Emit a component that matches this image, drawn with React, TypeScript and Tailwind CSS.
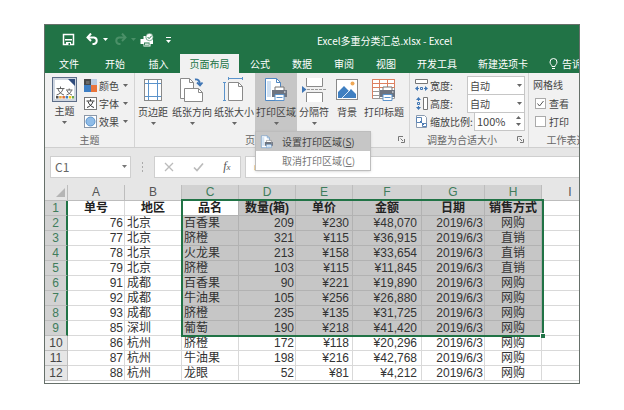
import type { ReactNode } from "react";
import clsx from "clsx";

const tabs = [
  { name: "文件", width: "w-12" },
  { name: "开始", width: "w-11" },
  { name: "插入", width: "w-[43px]" },
  { name: "页面布局", width: "w-[59px]" },
  { name: "公式", width: "w-[42px]" },
  { name: "数据", width: "w-[42px]" },
  { name: "审阅", width: "w-[42px]" },
  { name: "视图", width: "w-[42px]" },
  { name: "开发工具", width: "w-[60px]" },
  { name: "新建选项卡", width: "w-[72px]" },
];

const columns = [
  { name: "A", width: "w-[57px]" },
  { name: "B", width: "w-[57px]" },
  { name: "C", width: "w-[57px]" },
  { name: "D", width: "w-[57px]" },
  { name: "E", width: "w-[57px]" },
  { name: "F", width: "w-[69px]" },
  { name: "G", width: "w-[63px]" },
  { name: "H", width: "w-[57px]" },
  { name: "I", width: "" },
];

const rows = [
  ["单号", "地区", "品名", "数量(箱)", "单价", "金额", "日期", "销售方式"],
  ["76", "北京", "百香果", "209", "¥230", "¥48,070", "2019/6/3", "网购"],
  ["77", "北京", "脐橙", "321", "¥115", "¥36,915", "2019/6/3", "直销"],
  ["78", "北京", "火龙果", "213", "¥158", "¥33,654", "2019/6/3", "直销"],
  ["79", "北京", "脐橙", "103", "¥115", "¥11,845", "2019/6/3", "直销"],
  ["91", "成都", "百香果", "90", "¥221", "¥19,890", "2019/6/3", "网购"],
  ["92", "成都", "牛油果", "105", "¥256", "¥26,880", "2019/6/3", "网购"],
  ["93", "成都", "脐橙", "235", "¥135", "¥31,725", "2019/6/3", "网购"],
  ["85", "深圳", "葡萄", "190", "¥218", "¥41,420", "2019/6/3", "网购"],
  ["86", "杭州", "脐橙", "172", "¥118", "¥20,296", "2019/6/3", "网购"],
  ["87", "杭州", "牛油果", "198", "¥216", "¥42,768", "2019/6/3", "网购"],
  ["88", "杭州", "龙眼", "52", "¥81", "¥4,212", "2019/6/3", "网购"],
];

const aligns = [
  "text-right px-px",
  "text-left px-0.5",
  "text-left px-0.5",
  "text-right px-px",
  "text-right px-[3px]",
  "text-right px-1",
  "text-right px-px",
  "text-center px-0",
];

const isSelectedCol = (c: number) => c >= 2 && c <= 7;
const isSelectedRow = (r: number) => r <= 8;

function Caret({ className = "" }: { className?: string }) {
  return (
    <svg viewBox="0 0 5 3" className={clsx("h-[3px] w-[5px] shrink-0", className)}>
      <path d="M0 0h5L2.5 3z" fill="currentColor" />
    </svg>
  );
}

function Launcher() {
  return (
    <button aria-label="更多选项" className="mr-0.5 flex size-3 items-center justify-center text-[#777]">
      <svg viewBox="0 0 7 7" className="size-[7px]" fill="none" stroke="currentColor">
        <path d="M.5 5V.5H5M2.5 2.5L5 5M6.5 3v3.5H3" />
      </svg>
    </button>
  );
}

/* 快速访问工具栏图标 */

function SaveIcon() {
  return (
    <svg viewBox="0 0 13 13" className="size-[13px]">
      <path d="M1.500 1.500h10v10h-10z" fill="none" stroke="#fff" strokeWidth="1.500" />
      <path d="M3 6h7v1.500H3zM4 9h5v3H4z" fill="#fff" />
      <path d="M6.500 10h1.500v2H6.500z" fill="#217346" />
    </svg>
  );
}

function UndoIcon({ flip = false }: { flip?: boolean }) {
  return (
    <svg
      viewBox="0 0 13 13"
      className={clsx("size-[13px]", flip ? "-scale-x-100 text-[#4b9068]" : "text-white")}
      fill="none"
      stroke="currentColor"
      strokeWidth="2"
    >
      <path d="M2 4.500h6a3.300 3.300 0 0 1 0 6.500H6.500" />
      <path d="M5 .5L1.500 4.500L5 8" />
    </svg>
  );
}

function QuickPrintIcon() {
  return (
    <svg viewBox="0 0 14 14" className="size-3.5">
      <path d="M0.500 6h3V3h4.500v3h5v5h-2.500v2.500h-7V11h-3z" fill="#fff" />
      <path d="M4 9.500h5.500v3H4z" fill="#217346" />
      <path d="M4.800 10.500h4v1.300h-4z" fill="#fff" />
      <circle cx="9.500" cy="4" r="3.700" fill="#fff" stroke="#217346" strokeWidth=".6" />
      <path d="M7.600 4l1.500 1.600L11.800 2.600" fill="none" stroke="#217346" />
    </svg>
  );
}

function BulbIcon() {
  return (
    <svg viewBox="0 0 9 12" className="h-3 w-[9px]" fill="none" stroke="#fff">
      <path d="M3 8.500C3 7 1 6.300 1 4a3.500 3.500 0 0 1 7 0C8 6.300 6 7 6 8.500zM3 10.500h3" />
    </svg>
  );
}

/* 功能区图标 */

function ThemeIcon() {
  return (
    <svg viewBox="0 0 25 25" className="size-[25px]">
      <rect x=".5" y=".5" width="24" height="24" fill="#cfd6e0" stroke="#5c6d88" />
      <path d="M3 3h14l5 5v14H3z" fill="#fff" />
      <path d="M16 2h7v7z" fill="#2f4b7c" />
      <path
        d="M4.500 11.500h8M8.500 9.500v2M6 12c1 3 3 5 6 6M11 12c-1 3-3 5-6.500 6M14 13h6.500M17.200 11.500v1.500M15 13.500c1 2.500 3 3.800 5 4.500M19.500 13.500c-1 2.500-3 3.800-5 4.500"
        fill="none"
        stroke="#555"
        strokeWidth=".9"
      />
      <path d="M4 19h2.500v2.500H4z" fill="#555" />
      <path d="M7.200 19h2.500v2.500H7.200z" fill="#e8a33d" />
      <path d="M10.400 19h2.500v2.500h-2.500z" fill="#e06c3a" />
      <path d="M13.600 19h2.500v2.500h-2.500z" fill="#3f7fc1" />
      <path d="M16.800 19h2.500v2.500h-2.500z" fill="#f0c419" />
      <path d="M20 19h2v2.500h-2z" fill="#6aa84f" />
    </svg>
  );
}

function ColorsIcon() {
  return (
    <svg viewBox="0 0 13 13" className="size-[13px]">
      <path d="M0 0h7v6H0z" fill="#484848" />
      <path d="M7 0h6v6H7z" fill="#b8cbe2" />
      <path d="M0 6h7v7H0z" fill="#3e7fc4" />
      <path d="M7 6h6v7H7z" fill="#e8743b" />
      <path d="M2 2h3.500v3H2z" fill="#6a6a6a" />
    </svg>
  );
}

function FontsIcon() {
  return (
    <svg viewBox="0 0 13 13" className="size-[13px]">
      <rect x=".5" y=".5" width="12" height="12" fill="#fff" stroke="#777" />
      <path d="M2.500 4h8M6.500 2v2M4 4.500c1 3 3 5 6 6M9 4.500c-1 3-3 5-6 6" fill="none" stroke="#333" />
    </svg>
  );
}

function EffectsIcon() {
  return (
    <svg viewBox="0 0 13 13" className="size-[13px]">
      <rect x=".5" y=".5" width="12" height="12" fill="#fff" stroke="#8a97a8" />
      <circle cx="6.500" cy="6.500" r="4.500" fill="#8fbce8" stroke="#5b93cb" />
    </svg>
  );
}

function MarginsIcon() {
  return (
    <svg viewBox="0 0 26 26" className="size-[26px]" fill="none">
      <rect x="4.500" y="2.500" width="17" height="21" fill="#fff" stroke="#8a8a8a" />
      <path d="M8.500 3v20M17.500 3v20M5 6.500h16M5 19.500h16" stroke="#5b93cb" />
    </svg>
  );
}

function OrientationIcon() {
  return (
    <svg viewBox="0 0 26 26" className="size-[26px]" fill="none">
      <path d="M1.500 1.500h9l4 4v16h-13z" fill="#fff" stroke="#8a8a8a" />
      <path d="M10.500 1.500v4h4" stroke="#8a8a8a" />
      <path d="M5.500 11.500h14l4 4v9h-18z" fill="#fff" stroke="#8a8a8a" />
      <path d="M19.500 11.500v4h4" stroke="#8a8a8a" />
      <path d="M16 2.500c3-.5 5 1.500 5 5M18 5.500l3 3l2.500-3" stroke="#3f76b5" strokeWidth="1.800" />
    </svg>
  );
}

function SizeIcon() {
  return (
    <svg viewBox="0 0 26 26" className="size-[26px]" fill="none">
      <path d="M7.500 5.500h10l4 4v14h-14z" fill="#fff" stroke="#8a8a8a" />
      <path d="M17.500 5.500v4h4" stroke="#8a8a8a" />
      <path d="M7 1.500h15M7.500 0v3M21.500 0v3M3.500 5v19M2 5.500h3M2 23.500h3" stroke="#5b93cb" />
    </svg>
  );
}

function PrinterShape() {
  return (
    <>
      <path d="M12 10h9v4h-9z" fill="#fff" stroke="#777" />
      <path d="M9 13h15v7H9z" fill="#6d7480" />
      <path d="M12 17.500h9v6h-9z" fill="#fff" stroke="#5b93cb" />
      <path d="M13.500 20.500h6" stroke="#5b93cb" />
      <path d="M21 14.500h1.500v1H21z" fill="#fff" />
    </>
  );
}

function PrintAreaIcon({ className = "size-[26px]" }: { className?: string }) {
  return (
    <svg viewBox="0 0 26 26" className={className} fill="none">
      <path d="M2.500 1.500h11l4 4v18h-15z" fill="#fff" stroke="#4f87c2" />
      <path d="M13.500 1.500v4h4" stroke="#4f87c2" />
      <path d="M4 4h4v16H4z" fill="#cfe0f2" />
      <PrinterShape />
    </svg>
  );
}

function BreaksIcon() {
  return (
    <svg viewBox="0 0 26 26" className="size-[26px]" fill="none">
      <path d="M5.500 1v8.500h16V1M5.500 25V15.500h16V25" fill="#fff" stroke="#8a8a8a" />
      <path d="M6 12.500h19" stroke="#9a9a9a" strokeDasharray="3 1" />
      <path d="M1 9l4.500 3.500L1 16z" fill="#3f76b5" />
    </svg>
  );
}

function BackgroundIcon() {
  return (
    <svg viewBox="0 0 26 26" className="size-[26px]" fill="none">
      <rect x="2.500" y="2.500" width="21" height="20" fill="#fff" stroke="#8a8a8a" />
      <path d="M4 21v-6l6-6l5 5l2-2l5 5v4z" fill="#3f7fc1" />
      <path d="M8 21l8-8" stroke="#fff" strokeWidth=".8" />
      <circle cx="18.500" cy="6.500" r="2" fill="#efa755" />
    </svg>
  );
}

function PrintTitlesIcon() {
  return (
    <svg viewBox="0 0 26 26" className="size-[26px]" fill="none">
      <path d="M1.500 2.500h22v19h-22z" fill="#fff" stroke="#999" />
      <path d="M1.500 14.500h10M1.500 18.500h8M8.500 10v11M1.500 10.500h22" stroke="#999" />
      <path d="M1.500 2.500h22v8h-22zM1.500 6.500h22M8.500 2.500v8M16.500 2.500v8M1.500 10v11.500" stroke="#dd8060" />
      <PrinterShape />
    </svg>
  );
}

function WidthIcon() {
  return (
    <svg viewBox="0 0 13 13" className="size-[13px]" fill="none">
      <path d="M.5.5h12v4H.5z" fill="#fff" stroke="#777" />
      <path d="M0 9.500L3 7v5zM13 9.500L10 7v5z" fill="#3f76b5" />
      <path d="M2 9.500h2M9 9.500h2M5.500 8.500h2v2h-2z" stroke="#3f76b5" />
    </svg>
  );
}

function HeightIcon() {
  return (
    <svg viewBox="0 0 13 13" className="size-[13px]" fill="none">
      <path d="M8.500.5h4v12h-4z" fill="#fff" stroke="#777" />
      <path d="M3.500 0L1 3h5zM3.500 13L1 10h5z" fill="#3f76b5" />
      <path d="M3.500 2v2M3.500 9v2M2.500 5.500h2v2h-2z" stroke="#3f76b5" />
    </svg>
  );
}

function ScaleIcon() {
  return (
    <svg viewBox="0 0 13 13" className="size-[13px]" fill="none">
      <path d="M1.500.5h8l2 2v10h-10z" fill="#fff" stroke="#8a9bb0" />
      <path d="M1.500 2.500h5v5h-5zM7.500 8.500h4v3h-4z" fill="#fff" stroke="#5b84b5" />
      <path d="M5 6l4 4" stroke="#3f76b5" />
    </svg>
  );
}

function Group({
  label,
  launcher = false,
  className = "",
  children,
}: {
  label: string;
  launcher?: boolean;
  className?: string;
  children: ReactNode;
}) {
  return (
    <section aria-label={label} className={clsx("flex shrink-0 flex-col border-r border-[#d4d4d4]", className)}>
      <div className="flex h-[59px]">{children}</div>
      <div className="flex h-[15px] items-center text-[#666]">
        <span className="flex-1 text-center whitespace-nowrap">{label}</span>
        {launcher && <Launcher />}
      </div>
    </section>
  );
}

function BigButton({
  label,
  icon,
  width,
  caret = true,
  open = false,
}: {
  label: string;
  icon: ReactNode;
  width: string;
  caret?: boolean;
  open?: boolean;
}) {
  return (
    <button
      className={clsx(
        "flex h-[58px] flex-col items-center pt-1 whitespace-nowrap",
        width,
        open && "bg-[#c6c6c6]"
      )}
    >
      {icon}
      <span className="mt-px leading-[15px]">{label}</span>
      {caret && <Caret className="mt-[3px] text-[#666]" />}
    </button>
  );
}

function PrintAreaMenu() {
  return (
    <div
      role="menu"
      className="absolute top-[58px] left-0 z-10 w-[116px] border border-[#bdbdbd] bg-white text-[#444] shadow-sm"
    >
      <button role="menuitem" className="flex h-[19px] w-full items-center bg-[#c6c6c6] pl-1">
        <PrintAreaIcon className="size-3.5" />
        <span className="ml-2">
          设置打印区域(<u>S</u>)
        </span>
      </button>
      <button role="menuitem" className="flex h-[19px] w-full items-center pl-[26px] text-[#777]">
        <span>
          取消打印区域(<u>C</u>)
        </span>
      </button>
    </div>
  );
}

function SizeSelect({ id, label, icon }: { id: string; label: string; icon: ReactNode }) {
  return (
    <div className="flex h-[18px] items-center">
      {icon}
      <label htmlFor={id} className="ml-0.5 flex-1">
        {label}
      </label>
      <div className="relative">
        <select
          id={id}
          className="block h-[19px] w-[58px] appearance-none border border-[#c6c6c6] bg-white pl-0.5 leading-[17px]"
        >
          <option>自动</option>
        </select>
        <Caret className="pointer-events-none absolute top-2 right-[3px] text-[#666]" />
      </div>
    </div>
  );
}

function Ribbon() {
  return (
    <div className="flex h-[75px] border-b border-[#cfcfcf] bg-[#f1f1f1] text-[#444]">
      <Group label="主题" className="w-[90px]">
        <BigButton label="主题" width="w-[39px]" icon={<ThemeIcon />} />
        <div className="flex flex-col pt-[3px]">
          {[
            { name: "颜色", icon: <ColorsIcon /> },
            { name: "字体", icon: <FontsIcon /> },
            { name: "效果", icon: <EffectsIcon /> },
          ].map((item) => (
            <button key={item.name} className="flex h-[18px] items-center">
              {item.icon}
              <span className="ml-0.5">{item.name}</span>
              <Caret className="ml-1 text-[#666]" />
            </button>
          ))}
        </div>
      </Group>

      <Group label="页面设置" launcher className="w-[275px]">
        <BigButton label="页边距" width="w-9" icon={<MarginsIcon />} />
        <BigButton label="纸张方向" width="w-[42px]" icon={<OrientationIcon />} />
        <BigButton label="纸张大小" width="w-[42px]" icon={<SizeIcon />} />
        <div className="relative">
          <BigButton label="打印区域" width="w-[42px]" icon={<PrintAreaIcon />} open />
          <PrintAreaMenu />
        </div>
        <BigButton label="分隔符" width="w-[34px]" icon={<BreaksIcon />} />
        <BigButton label="背景" width="w-8" icon={<BackgroundIcon />} caret={false} />
        <BigButton label="打印标题" width="w-[42px]" icon={<PrintTitlesIcon />} caret={false} />
      </Group>

      <Group label="调整为合适大小" launcher className="w-[119px]">
        <div className="flex flex-1 flex-col pt-[3px] pr-[3px] pl-[5px]">
          <SizeSelect id="fit-width" label="宽度:" icon={<WidthIcon />} />
          <SizeSelect id="fit-height" label="高度:" icon={<HeightIcon />} />
          <div className="flex h-[18px] items-center">
            <ScaleIcon />
            <label htmlFor="scale" className="ml-0.5 flex-1 whitespace-nowrap">
              缩放比例:
            </label>
            <div className="relative">
              <input
                id="scale"
                defaultValue="100%"
                className="block h-[19px] w-[51px] border border-[#c6c6c6] bg-white pl-0.5 text-[11px]"
              />
              <div className="pointer-events-none absolute top-1 right-1 flex flex-col gap-1 text-[#666]">
                <Caret className="rotate-180" />
                <Caret />
              </div>
            </div>
          </div>
        </div>
      </Group>

      <Group label="工作表选项" className="w-[86px]">
        <div className="flex flex-col pt-[3px] pl-1">
          <span className="h-[18px] leading-[18px]">网格线</span>
          <label className="flex h-[18px] items-center gap-[3px] pl-0.5">
            <span className="relative flex">
              <input
                type="checkbox"
                defaultChecked
                className="peer size-[11px] appearance-none border border-[#aaa] bg-white"
              />
              <svg
                viewBox="0 0 11 11"
                className="pointer-events-none absolute inset-0 hidden size-[11px] peer-checked:block"
                fill="none"
                stroke="#555"
              >
                <path d="M2.500 5.500l2 2.500l4-5" />
              </svg>
            </span>
            查看
          </label>
          <label className="flex h-[18px] items-center gap-[3px] pl-0.5">
            <input type="checkbox" className="size-[11px] appearance-none border border-[#aaa] bg-white" />
            打印
          </label>
        </div>
      </Group>
    </div>
  );
}

function FormulaBar() {
  return (
    <div className="flex h-[37px] items-center gap-1 bg-[#e6e6e6] pl-[5px]">
      <div className="relative">
        <input
          aria-label="名称框"
          defaultValue="C1"
          className="block h-[22px] w-[81px] border border-[#cfcfcf] bg-white pl-1 text-xs text-[#666]"
        />
        <Caret className="pointer-events-none absolute top-[9px] right-1 text-[#777]" />
      </div>
      <svg viewBox="0 0 15 12" className="h-3 w-[15px]" fill="#aaa">
        <path d="M7 1h1v2H7zM7 5h1v2H7zM7 9h1v2H7z" />
      </svg>
      <div className="flex h-[22px] w-[87px] items-center justify-around border border-[#cfcfcf] bg-white text-[#bbb]">
        <button aria-label="取消">
          <svg viewBox="0 0 10 10" className="size-2.5" fill="none" stroke="currentColor" strokeWidth="1.300">
            <path d="M1 1l8 8M9 1L1 9" />
          </svg>
        </button>
        <button aria-label="输入">
          <svg viewBox="0 0 11 10" className="h-2.5 w-[11px]" fill="none" stroke="currentColor" strokeWidth="1.700">
            <path d="M1 5.500l3 3L10 1.500" />
          </svg>
        </button>
        <button
          aria-label="插入函数"
          className="font-['Liberation_Serif',serif] text-xs leading-3 text-[#555] italic"
        >
          f<span className="text-[9px]">x</span>
        </button>
      </div>
      <input
        aria-label="编辑栏"
        defaultValue="品名"
        className="h-[22px] min-w-0 flex-1 border border-r-0 border-[#cfcfcf] bg-white pb-1 pl-2 text-[10px] text-[#444]"
      />
    </div>
  );
}

function Sheet() {
  return (
    <div className="relative overflow-hidden bg-white pb-0.5 font-['Liberation_Sans','Noto_Sans_CJK_SC',sans-serif] text-xs">
      <table className="w-full min-w-[554px] table-fixed border-separate border-spacing-0 text-[#333]">
        <thead>
          <tr className="h-4 leading-[15px] text-[#555]">
            <th className="w-[23px] border-r border-b border-[#bdbdbd] bg-[#e6e6e6] p-0">
              <svg viewBox="0 0 9 9" className="mr-0.5 ml-auto size-[9px]">
                <path d="M9 0v9H0z" fill="#b5b5b5" />
              </svg>
            </th>
            {columns.map((col, c) => (
              <th
                key={col.name}
                className={clsx(
                  "border-r border-b border-[#bdbdbd] p-0 font-normal",
                  col.width,
                  isSelectedCol(c) ? "bg-[#d2d2d2] text-[#3f7d5c]" : "bg-[#e6e6e6]"
                )}
              >
                {col.name}
              </th>
            ))}
          </tr>
        </thead>
        <tbody>
          {rows.map((row, r) => (
            <tr key={r} className="h-[15px] leading-3.5">
              <th
                className={clsx(
                  "border-b border-b-[#bdbdbd] p-0 font-normal",
                  isSelectedRow(r)
                    ? "border-r-2 border-r-[#217346] bg-[#d2d2d2] text-[#3f7d5c]"
                    : "border-r border-r-[#bdbdbd] bg-[#e6e6e6] text-[#444]"
                )}
              >
                {r + 1}
              </th>
              {columns.map((col, c) => {
                const selected = isSelectedCol(c) && isSelectedRow(r);
                const active = c === 2 && r === 0;
                return (
                  <td
                    key={col.name}
                    className={clsx(
                      "border-r border-b py-0 whitespace-nowrap",
                      selected ? "border-[#b2b2b2]" : "border-[#d9d9d9]",
                      selected && !active && "bg-[#c6c6c6]",
                      r === 0 ? "px-0 text-center font-bold text-[#222]" : aligns[c]
                    )}
                  >
                    {row[c]}
                  </td>
                );
              })}
            </tr>
          ))}
        </tbody>
      </table>
      {/* 选区边框和填充柄 */}
      <div className="pointer-events-none absolute top-3.5 left-[136px] h-[138px] w-[363px] border-2 border-[#217346]">
        <span className="absolute -right-[3px] -bottom-[3px] size-[5px] border-t border-l border-white bg-[#217346]" />
      </div>
    </div>
  );
}

export default function App() {
  return (
    <main className="bg-white px-11 pt-6 pb-6 font-['Noto_Sans_CJK_SC',sans-serif] text-[10px] leading-[15px]">
      <div className="overflow-hidden border border-[#66706a]">
        <header className="bg-[#217346] text-white">
          <div className="flex h-[29px] items-center pl-[17px]">
            <button aria-label="保存">
              <SaveIcon />
            </button>
            <button aria-label="撤消" className="ml-[11px] flex items-center gap-1">
              <UndoIcon />
              <Caret />
            </button>
            <button aria-label="恢复" className="ml-1.5 flex items-center gap-1 text-[#4b9068]">
              <UndoIcon flip />
              <Caret />
            </button>
            <button aria-label="快速打印" className="ml-1">
              <QuickPrintIcon />
            </button>
            <button aria-label="自定义快速访问工具栏" className="ml-3 flex flex-col items-center gap-0.5">
              <span className="h-px w-[5px] bg-white" />
              <Caret />
            </button>
            <h1 className="ml-[146px] pt-0.5 whitespace-nowrap">Excel多重分类汇总.xlsx - Excel</h1>
          </div>
          <nav className="flex h-[19px]">
            {tabs.map((tab) => (
              <button
                key={tab.name}
                className={clsx(
                  "shrink-0 whitespace-nowrap",
                  tab.width,
                  tab.name === "页面布局" && "bg-[#f1f1f1] text-[#217346]"
                )}
              >
                {tab.name}
              </button>
            ))}
            <button className="ml-2.5 flex shrink-0 items-center gap-1 whitespace-nowrap">
              <BulbIcon />
              告诉我
            </button>
          </nav>
        </header>
        <Ribbon />
        <FormulaBar />
        <Sheet />
      </div>
    </main>
  );
}
